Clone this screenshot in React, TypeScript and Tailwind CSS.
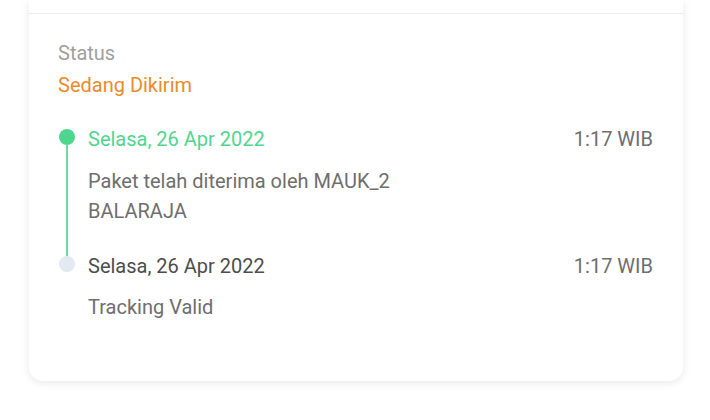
import React from "react";

export default function App() {
  return (
    <div className="w-[710px] h-[420px] bg-white overflow-hidden" style={{ fontFamily: "Roboto, 'Noto Sans', sans-serif" }}>
      <div className="ml-[29px] w-[654px] bg-white rounded-b-[14px] shadow-[0_2px_8px_rgba(0,0,0,0.09)]">
        <div className="h-[14px] border-b border-[#e9ecf0]" />
        <div className="pl-[29px] pr-[30px] pt-[24px] pb-[59px]">
          <div className="text-[20px] leading-[30px] text-[#a0a0a0]">Status</div>
          <div className="mt-[2px] text-[20px] leading-[30px] text-[#ea8b2d]">Sedang Dikirim</div>

          <div className="mt-[24px]">
            <div className="flex">
              <div className="w-[18px] flex flex-col items-center">
                <div className="mt-[5px] w-[16px] h-[16px] rounded-full bg-[#4fd68e] shrink-0" />
                <div className="w-[2px] flex-1 bg-[#6fdba3]" />
              </div>
              <div className="flex-1 ml-[12px] pb-[25px]">
                <div className="flex justify-between text-[20px] leading-[30px]">
                  <span className="text-[#4fd68e]">Selasa, 26 Apr 2022</span>
                  <span className="text-[#6e6e6e]">1:17 WIB</span>
                </div>
                <div className="mt-[12px] text-[20px] leading-[30px] text-[#6e6e6e]">
                  Paket telah diterima oleh MAUK_2
                  <br />
                  BALARAJA
                </div>
              </div>
            </div>
            <div className="flex">
              <div className="w-[18px] flex flex-col items-center">
                <div className="w-[2px] h-[5px] bg-[#6fdba3]" />
                <div className="w-[16px] h-[16px] rounded-full bg-[#e3e8f1] shrink-0" />
              </div>
              <div className="flex-1 ml-[12px]">
                <div className="flex justify-between text-[20px] leading-[30px]">
                  <span className="text-[#4d4d4d]">Selasa, 26 Apr 2022</span>
                  <span className="text-[#6e6e6e]">1:17 WIB</span>
                </div>
                <div className="mt-[11px] text-[20px] leading-[30px] text-[#6e6e6e]">Tracking Valid</div>
              </div>
            </div>
          </div>
        </div>
      </div>
    </div>
  );
}
